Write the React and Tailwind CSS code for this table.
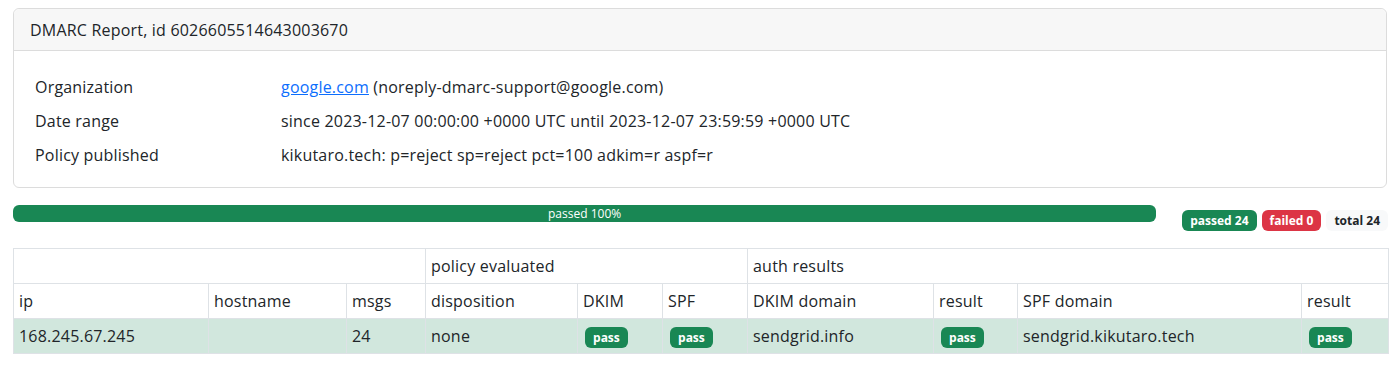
const FONT = "font-['Open_Sans',sans-serif]"

const info = [
  ['Organization', null],
  ['Date range', 'since 2023-12-07 00:00:00 +0000 UTC until 2023-12-07 23:59:59 +0000 UTC'],
  ['Policy published', 'kikutaro.tech: p=reject sp=reject pct=100 adkim=r aspf=r'],
]

const cols = [195, 138, 79, 152, 85, 85, 186, 84, 284, 87]

function Pass() {
  return (
    <span className="inline-block rounded-[6px] bg-[#198754] px-[8px] py-[3px] text-[12px] font-bold leading-[15px] tracking-normal text-white">
      pass
    </span>
  )
}

export default function App() {
  const td = 'border border-[#dee2e6] px-[5px] h-[35px] align-middle'
  return (
    <div className={`${FONT} min-h-[366px] bg-white px-[13px] pt-[8px] text-[16px] leading-[24px] tracking-[0.2px] text-[#212529]`}>
      <div className="rounded-[6px] border border-[#dcdcdc]">
        <div className="flex h-[42px] items-center rounded-t-[6px] border-b border-[#dcdcdc] bg-[#f7f7f7] px-[16px]">
          DMARC Report, id 6026605514643003670
        </div>
        <div className="px-[21px] pb-[15px] pt-[19px]">
          {info.map(([k, v]) => (
            <div key={k} className="flex h-[34px] items-center">
              <div className="w-[246px]">{k}</div>
              <div>
                {v ?? (
                  <>
                    <a href="#" className="text-[#0d6efd] underline">google.com</a> (noreply-dmarc-support@google.com)
                  </>
                )}
              </div>
            </div>
          ))}
        </div>
      </div>

      <div className="mt-[17px] flex items-start">
        <div className="flex h-[17px] flex-1 items-center justify-center rounded-[6px] bg-[#198754] text-[12px] leading-none tracking-normal text-white">
          passed 100%
        </div>
        <div className="ml-[26px] mr-[-1px] mt-[5px] flex gap-[5px] text-[12px] font-bold leading-[15px] tracking-normal">
          <span className="rounded-[6px] bg-[#198754] px-[8px] py-[3px] text-white">passed 24</span>
          <span className="rounded-[6px] bg-[#dc3545] px-[8px] py-[3px] text-white">failed 0</span>
          <span className="rounded-[6px] bg-[#f8f9fa] px-[8px] py-[3px] text-[#212529]">total 24</span>
        </div>
      </div>

      <table className="mt-[17px] w-full table-fixed border-collapse">
        <colgroup>
          {cols.map((w, i) => (
            <col key={i} style={{ width: w }} />
          ))}
        </colgroup>
        <thead>
          <tr>
            <th colSpan={3} className={`${td} text-left font-medium`}></th>
            <th colSpan={3} className={`${td} text-left font-medium`}>policy evaluated</th>
            <th colSpan={4} className={`${td} text-left font-medium`}>auth results</th>
          </tr>
          <tr>
            {['ip', 'hostname', 'msgs', 'disposition', 'DKIM', 'SPF', 'DKIM domain', 'result', 'SPF domain', 'result'].map((h, i) => (
              <th key={i} className={`${td} text-left font-medium`}>{h}</th>
            ))}
          </tr>
        </thead>
        <tbody>
          <tr className="bg-[#d1e7dd]">
            <td className={td}>168.245.67.245</td>
            <td className={td}></td>
            <td className={td}>24</td>
            <td className={td}>none</td>
            <td className={`${td} pl-[7px]`}><Pass /></td>
            <td className={`${td} pl-[7px]`}><Pass /></td>
            <td className={td}>sendgrid.info</td>
            <td className={`${td} pl-[7px]`}><Pass /></td>
            <td className={td}>sendgrid.kikutaro.tech</td>
            <td className={`${td} pl-[7px]`}><Pass /></td>
          </tr>
        </tbody>
      </table>
    </div>
  )
}
